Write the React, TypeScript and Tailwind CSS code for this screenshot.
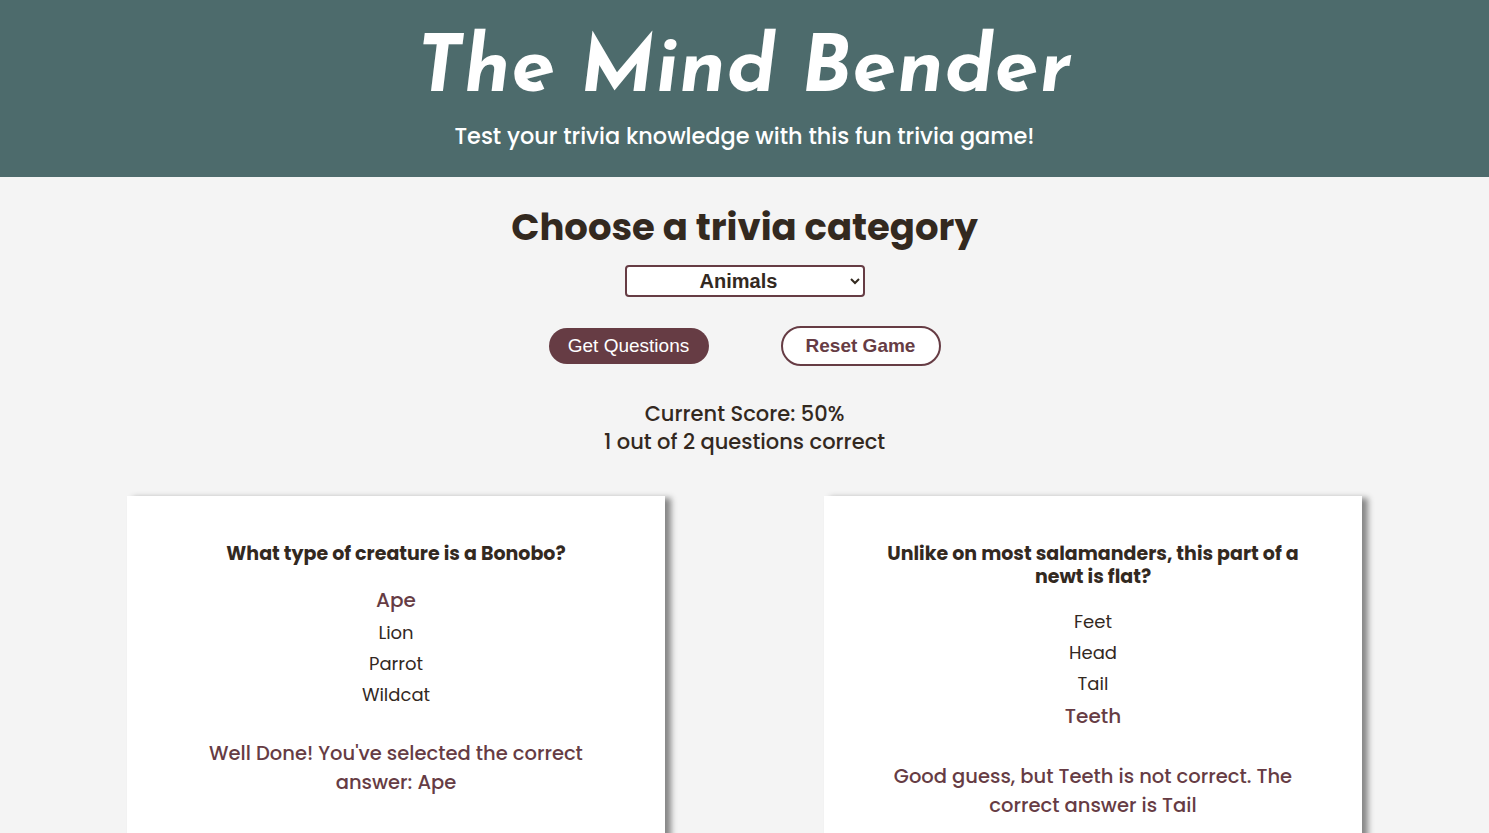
import { useState } from 'react'

const body = "font-['Poppins','Inter',sans-serif]"

type Question = {
  question: string
  options: string[]
  selected: string
  feedback: string
}

const questions: Question[] = [
  {
    question: 'What type of creature is a Bonobo?',
    options: ['Ape', 'Lion', 'Parrot', 'Wildcat'],
    selected: 'Ape',
    feedback: "Well Done! You've selected the correct answer: Ape",
  },
  {
    question: 'Unlike on most salamanders, this part of a newt is flat?',
    options: ['Feet', 'Head', 'Tail', 'Teeth'],
    selected: 'Teeth',
    feedback: 'Good guess, but Teeth is not correct. The correct answer is Tail',
  },
]

function QuestionCard({ q }: { q: Question }) {
  return (
    <div className="w-[538px] h-[400px] shrink-0 bg-white px-[58px] pt-[46px] shadow-[6px_2px_6px_rgba(0,0,0,0.45)] text-center">
      <h3 className="text-[19px] leading-[23px] font-bold text-[#33291f]">{q.question}</h3>
      <ul className="mt-[22px] flex flex-col gap-[7px]">
        {q.options.map((o) =>
          o === q.selected ? (
            <li key={o} className="text-[20px] leading-[27px] font-medium text-[#663c44]">
              {o}
            </li>
          ) : (
            <li key={o} className="text-[18px] leading-[24px] text-[#33291f]">
              {o}
            </li>
          ),
        )}
      </ul>
      <p className="mt-[32px] text-[19.5px] leading-[29px] font-medium text-[#663c44]">{q.feedback}</p>
    </div>
  )
}

export default function App() {
  const [category, setCategory] = useState('Animals')

  return (
    <div className={`min-h-screen bg-[#f4f4f4] ${body}`}>
      <header className="h-[177px] bg-[#4d6b6c] flex flex-col items-center">
        <h1 className="mt-[32px] text-[79px] leading-none font-bold italic text-white tracking-[0.7px] font-['Josefin_Sans','Lato',sans-serif]">
          The Mind Bender
        </h1>
        <p className="mt-[10px] text-[22.4px] leading-[30px] font-medium text-white">
          Test your trivia knowledge with this fun trivia game!
        </p>
      </header>

      <main className="flex flex-col items-center">
        <h2 className="mt-[25px] text-[37px] leading-[50px] font-bold text-[#33291f]">Choose a trivia category</h2>
        <select
          value={category}
          onChange={(e) => setCategory(e.target.value)}
          className="mt-[13px] w-[240px] h-[32px] bg-white border-2 border-[#663c44] rounded-[4px] text-center text-[20px] font-bold text-[#33291f] font-['Liberation_Sans',Arial,sans-serif]"
        >
          <option>Animals</option>
          <option>General Knowledge</option>
          <option>Science</option>
          <option>History</option>
        </select>

        <div className="mt-[29px] flex items-center gap-[72px] font-['Liberation_Sans',Arial,sans-serif]">
          <button className="w-[160px] h-[36px] rounded-full bg-[#663c44] text-white text-[19px]">Get Questions</button>
          <button className="w-[160px] h-[40px] rounded-full bg-white border-2 border-[#663c44] text-[#663c44] text-[19px] font-bold">
            Reset Game
          </button>
        </div>

        <div className="mt-[34px] text-center text-[21px] leading-[28px] font-medium text-[#33291f]">
          <p>Current Score: 50%</p>
          <p>1 out of 2 questions correct</p>
        </div>

        <div className="mt-[40px] flex justify-center gap-[159px]">
          {questions.map((q) => (
            <QuestionCard key={q.question} q={q} />
          ))}
        </div>
      </main>
    </div>
  )
}
